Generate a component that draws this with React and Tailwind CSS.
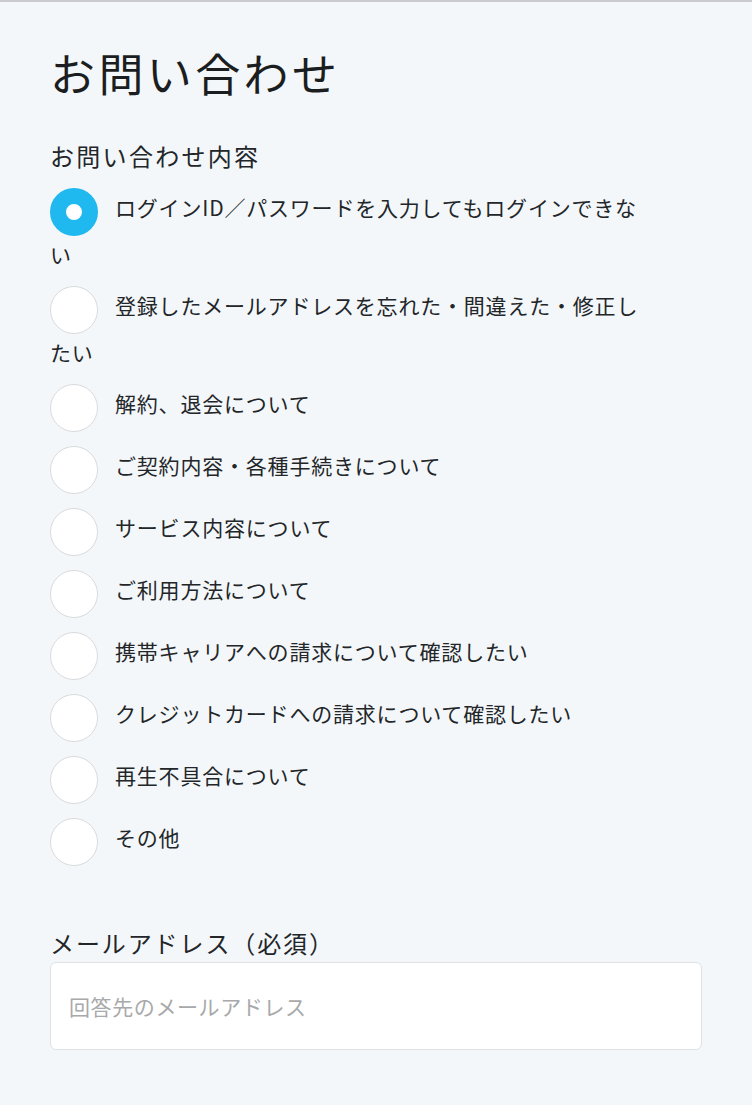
import React, { useState } from 'react';

const options = [
  'ログインID／パスワードを入力してもログインできない',
  '登録したメールアドレスを忘れた・間違えた・修正したい',
  '解約、退会について',
  'ご契約内容・各種手続きについて',
  'サービス内容について',
  'ご利用方法について',
  '携帯キャリアへの請求について確認したい',
  'クレジットカードへの請求について確認したい',
  '再生不具合について',
  'その他',
];

const font = { fontFamily: '"Noto Sans CJK JP", "Noto Sans", sans-serif' };

const App = () => {
  const [selected, setSelected] = useState(0);
  const [email, setEmail] = useState('');

  return (
    <div
      className="min-h-screen bg-[#f4f7f9] border-t-2 border-[#c9cbce] px-[50px] pb-12 text-[#222629]"
      style={font}
    >
      <h1 className="pt-[43px] text-[45px] leading-[56px] tracking-[3.4px] text-[#1b1e21]">お問い合わせ</h1>

      {/* Inquiry type */}
      <p className="mt-[39px] mb-[16px] text-[24px] leading-[32px] tracking-[2.3px]">お問い合わせ内容</p>
      <div className="w-[600px]">
        {options.map((label, i) => (
          <label
            key={i}
            className="block mb-[14px] text-[21px] leading-[36px] tracking-[0.8px] cursor-pointer"
            onClick={() => setSelected(i)}
          >
            <span
              className={`inline-block align-[-20px] w-12 h-12 rounded-full mr-[17px] ${
                selected === i
                  ? 'border-[16px] border-[#1fb9ef] bg-white'
                  : 'border-[1.5px] border-[#d9dbdd] bg-white'
              }`}
            />
            {label}
          </label>
        ))}
      </div>

      {/* Email */}
      <p className="mt-[61px] mb-[3px] text-[24px] leading-[32px] tracking-[1.9px]">メールアドレス（必須）</p>
      <input
        type="email"
        value={email}
        onChange={(e) => setEmail(e.target.value)}
        placeholder="回答先のメールアドレス"
        className="block w-full h-[88px] px-[18px] bg-white border border-[#dfe2e5] rounded-md text-[21px] tracking-[0.6px] placeholder:text-[#a8a9aa] outline-none"
      />
    </div>
  );
};

export default App;
